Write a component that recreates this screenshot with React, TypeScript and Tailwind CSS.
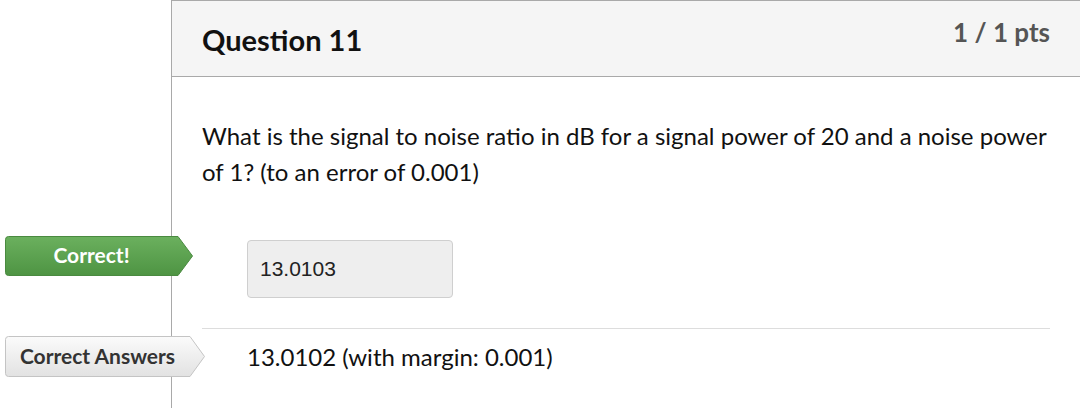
import React from "react";

function Badge({ label, tone }: { label: string; tone: "green" | "gray" }) {
  const green = tone === "green";
  const bodyW = green ? 173 : 185;
  const h = green ? 40 : 41;
  const id = green ? "gGreen" : "gGray";
  const top = green ? "#6bb05e" : "#fbfbfb";
  const bottom = green ? "#4e9443" : "#e2e2e2";
  const stroke = green ? "#4a8a40" : "#c4c4c4";
  const w = bodyW + 15;
  return (
    <div className="relative" style={{ width: w, height: h }}>
      <svg width={w} height={h} className="absolute inset-0" viewBox={`0 0 ${w} ${h}`}>
        <defs>
          <linearGradient id={id} x1="0" y1="0" x2="0" y2="1">
            <stop offset="0" stopColor={top} />
            <stop offset="1" stopColor={bottom} />
          </linearGradient>
        </defs>
        <path
          d={`M3.5 0.5 H${bodyW} L${w - 0.5} ${h / 2} L${bodyW} ${h - 0.5} H3.5 Q0.5 ${h - 0.5} 0.5 ${h - 3.5} V3.5 Q0.5 0.5 3.5 0.5 Z`}
          fill={`url(#${id})`}
          stroke={stroke}
          strokeWidth="1"
        />
      </svg>
      <div
        className={`relative flex items-center justify-center h-full text-[21px] font-bold pb-[2px] ${
          green ? "text-white" : "text-[#333]"
        }`}
        style={{ width: bodyW }}
      >
        {label}
      </div>
    </div>
  );
}

export default function App() {
  return (
    <div className="relative w-[1080px] h-[408px] overflow-hidden bg-white font-['Lato',sans-serif] text-[#222]">
      <div className="flex">
        <div className="w-[171px] shrink-0" />
        <div className="w-[912px] h-[408px] border-l border-t border-[#a9a9a9]">
          <div className="h-[76px] bg-[#f5f5f5] border-b border-[#a9a9a9] flex justify-between pl-[30px] pr-[30px]">
            <h2 className="text-[29px] font-bold text-[#111] pt-[19px] leading-[40px]">Question 11</h2>
            <div className="text-[26px] font-bold text-[#555] pt-[13px] leading-[36px]">1 / 1 pts</div>
          </div>
          <div className="pl-[30px] pr-[30px]">
            <p className="mt-[41px] text-[24px] leading-[36px] text-[#111]">
              What is the signal to noise ratio in dB for a signal power of 20 and a noise power of 1? (to an
              error of 0.001)
            </p>
            <div className="relative mt-[50px] pl-[45px]">
              <div className="absolute left-[-197px] top-[-4px]">
                <Badge label="Correct!" tone="green" />
              </div>
              <div className="w-[206px] h-[58px] rounded-[4px] border border-[#cfcfcf] bg-[#eeeeee] flex items-center pl-[12px] font-['Liberation_Sans',Arial,sans-serif] text-[21px] text-[#222]">
                13.0103
              </div>
            </div>
            <div className="mt-[30px] border-t border-[#dddddd]" />
            <div className="relative mt-[7px] h-[41px] flex items-center pl-[45px]">
              <div className="absolute left-[-197px] top-0">
                <Badge label="Correct Answers" tone="gray" />
              </div>
              <span className="text-[24px] text-[#111]">13.0102 (with margin: 0.001)</span>
            </div>
          </div>
        </div>
      </div>
    </div>
  );
}
